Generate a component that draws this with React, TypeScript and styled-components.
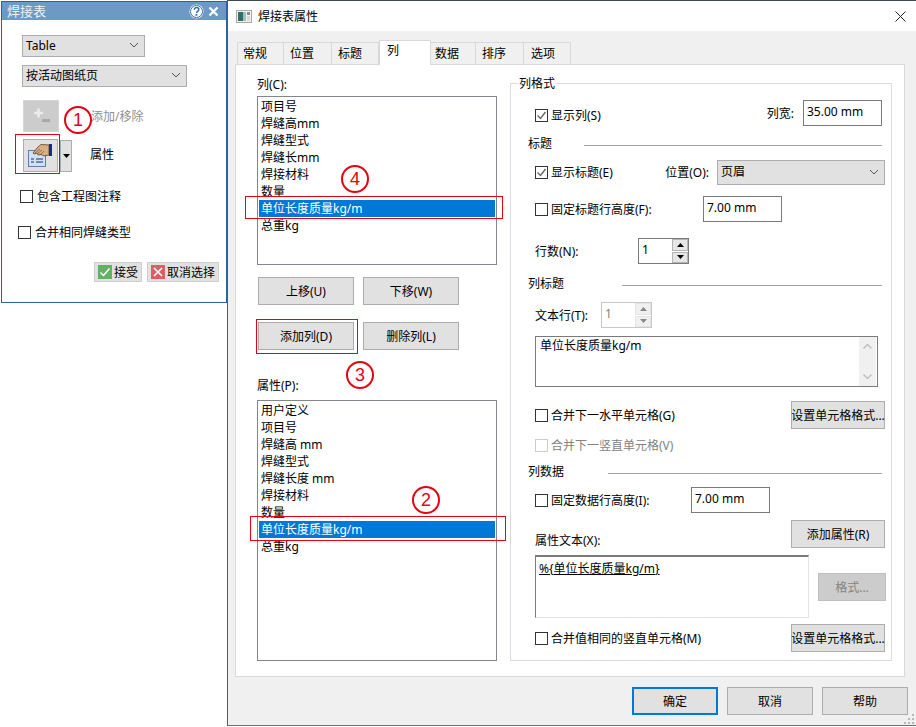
import styled, { createGlobalStyle } from "styled-components";

const GlobalStyle = createGlobalStyle`
  html, body {
    margin: 0;
    padding: 0;
    background: #fff;
    overflow: hidden;
  }
  * {
    box-sizing: border-box;
  }
`

const Desktop = styled.div`
  position: relative;
  width: 916px;
  height: 727px;
  display: flex;
  align-items: flex-start;
  background: #fff;
  color: #000;
  font-family: "Noto Sans", "Noto Sans CJK SC", sans-serif;
  font-size: 12px;
  line-height: 17px;
  white-space: nowrap;
`

/* left docked panel */
const Panel = styled.div`
  width: 226px;
  height: 302px;
  margin: 1px 0 0 1px;
  border: 1px solid #2f5f9e;
  flex-shrink: 0;
`

const PanelTitle = styled.div`
  height: 18px;
  background: #6d9ac4;
  color: #edf3f8;
  font-size: 13px;
  line-height: 18px;
  padding: 0 7px 0 5px;
  display: flex;
  align-items: center;
  justify-content: space-between;
`

const PanelIcons = styled.div`
  display: flex;
  align-items: center;
  gap: 4px;
`

const PanelRow = styled.div<{ $mt: number; $ml: number; $h: number }>`
  display: flex;
  align-items: center;
  margin: ${p => p.$mt}px 0 0 ${p => p.$ml}px;
  height: ${p => p.$h}px;
`

const Select = styled.div<{ $w: number; $h: number }>`
  width: ${p => p.$w}px;
  height: ${p => p.$h}px;
  background: #e1e1e1;
  border: 1px solid #adadad;
  padding: 0 5px 2px 3px;
  display: flex;
  align-items: center;
  justify-content: space-between;
`

const ToolButton = styled.div<{ $w: number; $h: number; $off?: boolean }>`
  width: ${p => p.$w}px;
  height: ${p => p.$h}px;
  background: ${p => (p.$off ? "#cccccc" : "#e1e1e1")};
  border: 1px solid ${p => (p.$off ? "#d6d6d6" : "#adadad")};
  display: flex;
  align-items: center;
  justify-content: center;
`

const SplitArrow = styled(ToolButton)`
  margin-left: 2px;
`

const ToolLabel = styled.span<{ $ml: number; $off?: boolean; $dy?: number }>`
  margin-left: ${p => p.$ml}px;
  margin-top: ${p => p.$dy ?? 0}px;
  color: ${p => (p.$off ? "#8f8f8f" : "#000")};
`

const ActionButton = styled.div<{ $w: number; $mr?: number }>`
  width: ${p => p.$w}px;
  height: 20px;
  margin-right: ${p => p.$mr ?? 0}px;
  background: #e1e1e1;
  border: 1px solid #cfcfcf;
  display: flex;
  align-items: center;
  justify-content: center;
  gap: 2px;
`

/* properties dialog */
const Dialog = styled.div`
  flex: 1;
  height: 726px;
  margin-left: 0;
  border-left: 1px solid #5a5a5a;
  border-top: 1px solid #3f4a55;
  border-bottom: 1px solid #6e6e6e;
  display: flex;
  flex-direction: column;
`

const DialogTitle = styled.div`
  height: 30px;
  background: #fff;
  padding: 0 10px 0 8px;
  display: flex;
  align-items: center;
  gap: 6px;
`

const CloseBox = styled.div`
  margin-left: auto;
  display: flex;
`

const DialogBody = styled.div`
  flex: 1;
  background: #f0f0f0;
  display: flex;
  flex-direction: column;
`

const TabStrip = styled.div`
  display: flex;
  align-items: flex-end;
  height: 25px;
  margin: 9px 0 -1px 9px;
  position: relative;
`

const Tab = styled.div<{ $w: number; $pl: number; $active?: boolean }>`
  width: ${p => p.$w}px;
  height: ${p => (p.$active ? 25 : 23)}px;
  background: ${p => (p.$active ? "#fff" : "#f0f0f0")};
  border: 1px solid #d9d9d9;
  border-left-width: ${p => (p.$active ? 1 : 0)}px;
  border-bottom-width: ${p => (p.$active ? 0 : 1)}px;
  padding: ${p => (p.$active ? 1 : 2)}px 0 0 ${p => p.$pl}px;
  z-index: ${p => (p.$active ? 2 : 0)};
  &:first-child {
    border-left-width: 1px;
  }
`

const TabPanel = styled.div`
  width: 670px;
  height: 613px;
  margin-left: 7px;
  background: #fff;
  border: 1px solid #d9d9d9;
  display: flex;
  padding-left: 21px;
`

const LeftColumn = styled.div`
  width: 240px;
  padding-top: 11px;
`

const ColumnLabel = styled.div<{ $h: number; $pt?: number }>`
  height: ${p => p.$h}px;
  padding-top: ${p => p.$pt ?? 0}px;
`

const ListBox = styled.div<{ $h: number }>`
  height: ${p => p.$h}px;
  border: 1px solid #82878f;
  padding: 1px;
  background: #fff;
`

const ListItem = styled.div<{ $selected?: boolean }>`
  height: 17px;
  line-height: 17px;
  padding-left: 2px;
  background: ${p => (p.$selected ? "#0078d7" : "transparent")};
  color: ${p => (p.$selected ? "#fff" : "#000")};
`

const ButtonRow = styled.div<{ $mt: number }>`
  display: flex;
  gap: 9px;
  margin: ${p => p.$mt}px 0 0 1px;
`

const Button = styled.div<{ $w: number; $off?: boolean; $default?: boolean }>`
  width: ${p => p.$w}px;
  height: 28px;
  flex-shrink: 0;
  background: ${p => (p.$off ? "#cccccc" : "#e1e1e1")};
  border: ${p => (p.$default ? "2px solid #0078d7" : `1px solid ${p.$off ? "#bfbfbf" : "#adadad"}`)};
  color: ${p => (p.$off ? "#838383" : "#000")};
  display: flex;
  align-items: center;
  justify-content: center;
`

const GroupBox = styled.div`
  position: relative;
  width: 382px;
  height: 578px;
  margin: 18px 0 0 13px;
  border: 1px solid #dcdcdc;
`

const GroupLegend = styled.span`
  position: absolute;
  left: 7px;
  top: -9px;
  padding: 0 1px;
  background: #fff;
`

const FormRow = styled.div<{ $mt: number; $h: number; $pr?: number }>`
  display: flex;
  align-items: center;
  justify-content: space-between;
  height: ${p => p.$h}px;
  margin-top: ${p => p.$mt}px;
  padding: 0 ${p => p.$pr ?? 6}px 0 24px;
`

const Cluster = styled.div`
  display: flex;
  align-items: center;
`

const Field = styled.label<{ $w?: number; $dy?: number; $off?: boolean }>`
  display: flex;
  align-items: center;
  gap: 3px;
  width: ${p => (p.$w ? `${p.$w}px` : "auto")};
  margin-top: ${p => p.$dy ?? 0}px;
  color: ${p => (p.$off ? "#838383" : "#000")};
`

const Box = styled.span<{ $off?: boolean }>`
  width: 13px;
  height: 13px;
  flex-shrink: 0;
  background: #fff;
  border: 1px solid ${p => (p.$off ? "#cccccc" : "#333")};
  display: flex;
  align-items: center;
  justify-content: center;
`

const PanelField = styled(Field)`
  gap: 4px;
`

const TextInput = styled.div<{ $w: number }>`
  width: ${p => p.$w}px;
  height: 26px;
  flex-shrink: 0;
  border: 1px solid #7a7a7a;
  background: #fff;
  padding: 2px 0 0 3px;
`

const FieldLabel = styled.span<{ $w?: number; $dy?: number; $mr?: number }>`
  display: inline-block;
  width: ${p => (p.$w ? `${p.$w}px` : "auto")};
  margin-top: ${p => p.$dy ?? 0}px;
  margin-right: ${p => p.$mr ?? 0}px;
`

const SectionRow = styled.div<{ $mt: number }>`
  display: flex;
  align-items: center;
  height: 18px;
  margin-top: ${p => p.$mt}px;
  padding: 0 9px 0 17px;
`

const SectionLabel = styled.span<{ $w: number }>`
  width: ${p => p.$w}px;
`

const SectionLine = styled.div`
  flex: 1;
  height: 1px;
  margin-top: 5px;
  background: #a0a0a0;
`

const Spin = styled.div<{ $off?: boolean }>`
  width: 51px;
  height: 26px;
  display: flex;
  background: #fff;
  border: 1px solid ${p => (p.$off ? "#c8c8c8" : "#7a7a7a")};
  color: ${p => (p.$off ? "#838383" : "#000")};
`

const SpinValue = styled.div`
  flex: 1;
  padding: 2px 0 0 3px;
`

const SpinButtons = styled.div`
  width: 16px;
  display: flex;
  flex-direction: column;
  gap: 1px;
`

const SpinButton = styled.div<{ $off?: boolean }>`
  flex: 1;
  background: ${p => (p.$off ? "#f0f0f0" : "#e6e6e6")};
  border: 1px solid ${p => (p.$off ? "#e4e4e4" : "#b4b4b4")};
  display: flex;
  align-items: center;
  justify-content: center;
`

const TextArea = styled.div`
  width: 343px;
  height: 51px;
  margin: 8px 0 0 24px;
  border: 1px solid #7a7a7a;
  display: flex;
  justify-content: space-between;
  padding-left: 4px;
`

const ScrollTrack = styled.div`
  width: 17px;
  background: #f0f0f0;
  margin-right: 1px;
  display: flex;
  flex-direction: column;
  justify-content: space-between;
  align-items: center;
  padding: 7px 0;
`

const SunkenBox = styled.div`
  width: 274px;
  height: 63px;
  border: 1px solid #e3e3e3;
  border-top: 2px solid #7a7a7a;
  border-left: 1px solid #7a7a7a;
  padding: 3px 0 0 3px;
  text-decoration: underline;
`

const SideButton = styled(Button)`
  align-self: flex-start;
  margin-top: 18px;
`

const Footer = styled.div`
  display: flex;
  justify-content: flex-end;
  gap: 9px;
  padding: 10px 8px 0 0;
`

const Grip = styled.svg`
  position: absolute;
  right: 1px;
  bottom: 2px;
`

/* red hand-drawn annotations lying over the screenshot */
const MarkRect = styled.div<{ $x: number; $y: number; $w: number; $h: number }>`
  position: absolute;
  left: ${p => p.$x}px;
  top: ${p => p.$y}px;
  width: ${p => p.$w}px;
  height: ${p => p.$h}px;
  border: 1px solid #e60012;
  pointer-events: none;
`

const MarkCircle = styled.div<{ $cx: number; $cy: number }>`
  position: absolute;
  left: ${p => p.$cx - 14}px;
  top: ${p => p.$cy - 14}px;
  width: 28px;
  height: 28px;
  border: 2px solid #e60012;
  border-radius: 50%;
  background: #fff;
  color: #e60012;
  font-family: "Liberation Sans", sans-serif;
  font-size: 18px;
  line-height: 24px;
  text-align: center;
`

const Chevron = () => (
  <svg width="10" height="6" viewBox="0 0 10 6">
    <path d="M1 1l4 4 4-4" fill="none" stroke="#555" strokeWidth="1" />
  </svg>
)

const Check = () => (
  <svg width="11" height="11" viewBox="0 0 11 11">
    <path d="M1.5 5.5l3 3 5-6.5" fill="none" stroke="#666" strokeWidth="1.4" />
  </svg>
)

const Tri = ({ up, color = "#000" }: { up?: boolean; color?: string }) => (
  <svg width="7" height="4" viewBox="0 0 7 4">
    <path d={up ? "M3.5 0L7 4H0z" : "M0 0h7L3.5 4z"} fill={color} />
  </svg>
)

const HelpIcon = () => (
  <svg width="15" height="15" viewBox="0 0 15 15">
    <circle cx="7.5" cy="7.5" r="7" fill="#fff" />
    <circle cx="7.5" cy="7.5" r="6" fill="none" stroke="#2f6ca5" strokeWidth="1" />
    <path d="M5.300 5.800c0-1.400 1-2.200 2.200-2.200s2.300.8 2.300 2c0 1.700-2.200 1.700-2.200 3.400" fill="none" stroke="#2f6ca5" strokeWidth="1.500" />
    <rect x="6.500" y="10" width="1.800" height="1.800" fill="#2f6ca5" />
  </svg>
)

const WhiteX = () => (
  <svg width="11" height="11" viewBox="0 0 11 11">
    <path d="M1.500 1.500l8 8M9.500 1.500l-8 8" stroke="#fff" strokeWidth="2.200" />
  </svg>
)

const PlusMinusIcon = () => (
  <svg width="20" height="20" viewBox="0 0 20 20">
    <path d="M3 7h9M7.500 2.500v9" stroke="#ececec" strokeWidth="2.600" />
    <rect x="11" y="13" width="8" height="3" fill="#a8a8a8" />
  </svg>
)

const PropertyIcon = () => (
  <svg width="28" height="25" viewBox="0 0 28 25">
    <rect x="1.500" y="7.500" width="17" height="16" fill="#cfe2f5" stroke="#5f7fa8" />
    <path d="M4 16h3M9 16h7M4 19h3M9 19h7" stroke="#1d2f6f" strokeWidth="1" />
    <path d="M6 10l5-6 3-2.500 8 .5v10l-5 1-3-1.500-3 .5-1-2-3 1z" fill="#d9b084" stroke="#5c4026" strokeWidth="0.800" />
    <path d="M8 10l5-4M10 11l5-4M13 12l4-4" stroke="#7a5533" strokeWidth="0.700" />
    <rect x="22" y="1" width="3" height="12" fill="#1d2a8a" />
  </svg>
)

const AcceptIcon = () => (
  <svg width="14" height="14" viewBox="0 0 14 14">
    <rect width="14" height="14" fill="#62b266" />
    <path d="M2.500 7.500l3 3 6-7" fill="none" stroke="#fff" strokeWidth="1.400" />
  </svg>
)

const CancelIcon = () => (
  <svg width="14" height="14" viewBox="0 0 14 14">
    <rect width="14" height="14" fill="#d95f66" />
    <path d="M3 3l8 8M11 3l-8 8" stroke="#fff" strokeWidth="1.600" />
  </svg>
)

const WindowIcon = () => (
  <svg width="16" height="13" viewBox="0 0 16 13">
    <rect x="0.500" y="0.500" width="15" height="12" fill="#f2f2f2" stroke="#a8a8a8" />
    <rect x="2" y="2" width="5" height="9" fill="#2f6f68" />
    <rect x="7" y="2" width="3" height="9" fill="#9fc3bd" />
    <rect x="11" y="2" width="3" height="3" fill="#8f8f8f" />
    <rect x="11" y="6" width="3" height="5" fill="#d8d8d8" />
  </svg>
)

const columnItems = ["项目号", "焊缝高mm", "焊缝型式", "焊缝长mm", "焊接材料", "数量", "单位长度质量kg/m", "总重kg"]
const propertyItems = ["用户定义", "项目号", "焊缝高 mm", "焊缝型式", "焊缝长度 mm", "焊接材料", "数量", "单位长度质量kg/m", "总重kg"]
const tabs = [
  { name: "常规", w: 47, pl: 5 },
  { name: "位置", w: 48, pl: 6 },
  { name: "标题", w: 47, pl: 6 },
  { name: "列", w: 52, pl: 7, active: true },
  { name: "数据", w: 45, pl: 4 },
  { name: "排序", w: 48, pl: 6 },
  { name: "选项", w: 47, pl: 7 },
]

export default function App() {
  return (
    <Desktop>
      <GlobalStyle />
      <Panel>
        <PanelTitle>
          <span>焊接表</span>
          <PanelIcons>
            <HelpIcon />
            <WhiteX />
          </PanelIcons>
        </PanelTitle>
        <PanelRow $mt={15} $ml={20} $h={22}>
          <Select $w={123} $h={22}>Table<Chevron /></Select>
        </PanelRow>
        <PanelRow $mt={8} $ml={20} $h={22}>
          <Select $w={165} $h={22}>按活动图纸页<Chevron /></Select>
        </PanelRow>
        <PanelRow $mt={13} $ml={21} $h={32}>
          <ToolButton $w={36} $h={32} $off><PlusMinusIcon /></ToolButton>
          <ToolLabel $ml={32} $off $dy={1}>添加/移除</ToolLabel>
        </PanelRow>
        <PanelRow $mt={7} $ml={21} $h={33}>
          <ToolButton $w={35} $h={33}><PropertyIcon /></ToolButton>
          <SplitArrow $w={12} $h={32}><Tri /></SplitArrow>
          <ToolLabel $ml={18} $dy={-3}>属性</ToolLabel>
        </PanelRow>
        <PanelRow $mt={16} $ml={18} $h={17}>
          <PanelField><Box />包含工程图注释</PanelField>
        </PanelRow>
        <PanelRow $mt={19} $ml={16} $h={17}>
          <PanelField><Box />合并相同焊缝类型</PanelField>
        </PanelRow>
        <PanelRow $mt={21} $ml={92} $h={20}>
          <ActionButton $w={48} $mr={5}><AcceptIcon />接受</ActionButton>
          <ActionButton $w={72}><CancelIcon />取消选择</ActionButton>
        </PanelRow>
      </Panel>

      <Dialog>
        <DialogTitle>
          <WindowIcon />
          <span>焊接表属性</span>
          <CloseBox>
            <svg width="11" height="11" viewBox="0 0 11 11">
              <path d="M.5.5l10 10M10.500.5l-10 10" stroke="#222" strokeWidth="1" />
            </svg>
          </CloseBox>
        </DialogTitle>
        <DialogBody>
          <TabStrip>
            {tabs.map(t => (
              <Tab key={t.name} $w={t.w} $pl={t.pl} $active={t.active}>{t.name}</Tab>
            ))}
          </TabStrip>
          <TabPanel>
            <LeftColumn>
              <ColumnLabel $h={20}>列(C):</ColumnLabel>
              <ListBox $h={169}>
                {columnItems.map(i => (
                  <ListItem key={i} $selected={i === "单位长度质量kg/m"}>{i}</ListItem>
                ))}
              </ListBox>
              <ButtonRow $mt={12}>
                <Button $w={96}>上移(U)</Button>
                <Button $w={96}>下移(W)</Button>
              </ButtonRow>
              <ButtonRow $mt={17}>
                <Button $w={96}>添加列(D)</Button>
                <Button $w={96}>删除列(L)</Button>
              </ButtonRow>
              <ColumnLabel $h={50} $pt={27}>属性(P):</ColumnLabel>
              <ListBox $h={261}>
                {propertyItems.map(i => (
                  <ListItem key={i} $selected={i === "单位长度质量kg/m"}>{i}</ListItem>
                ))}
              </ListBox>
            </LeftColumn>

            <GroupBox>
              <GroupLegend>列格式</GroupLegend>
              <FormRow $mt={16} $h={26} $pr={9}>
                <Field $dy={4}><Box><Check /></Box>显示列(S)</Field>
                <Cluster>
                  <FieldLabel $mr={9}>列宽:</FieldLabel>
                  <TextInput $w={79}>35.00 mm</TextInput>
                </Cluster>
              </FormRow>
              <SectionRow $mt={8}>
                <SectionLabel $w={56}>标题</SectionLabel>
                <SectionLine />
              </SectionRow>
              <FormRow $mt={8} $h={25}>
                <Field><Box><Check /></Box>显示标题(E)</Field>
                <Cluster>
                  <FieldLabel $mr={8}>位置(O):</FieldLabel>
                  <Select $w={168} $h={25}>页眉<Chevron /></Select>
                </Cluster>
              </FormRow>
              <FormRow $mt={11} $h={26} $pr={0}>
                <Cluster>
                  <Field $w={168}><Box />固定标题行高度(F):</Field>
                  <TextInput $w={79}>7.00 mm</TextInput>
                </Cluster>
              </FormRow>
              <FormRow $mt={16} $h={26}>
                <Cluster>
                  <FieldLabel $w={103}>行数(N):</FieldLabel>
                  <Spin>
                    <SpinValue>1</SpinValue>
                    <SpinButtons>
                      <SpinButton><Tri up /></SpinButton>
                      <SpinButton><Tri /></SpinButton>
                    </SpinButtons>
                  </Spin>
                </Cluster>
              </FormRow>
              <SectionRow $mt={10}>
                <SectionLabel $w={94}>列标题</SectionLabel>
                <SectionLine />
              </SectionRow>
              <FormRow $mt={10} $h={26}>
                <Cluster>
                  <FieldLabel $w={66}>文本行(T):</FieldLabel>
                  <Spin $off>
                    <SpinValue>1</SpinValue>
                    <SpinButtons>
                      <SpinButton $off><Tri up color="#888" /></SpinButton>
                      <SpinButton $off><Tri color="#888" /></SpinButton>
                    </SpinButtons>
                  </Spin>
                </Cluster>
              </FormRow>
              <TextArea>
                <span>单位长度质量kg/m</span>
                <ScrollTrack>
                  <svg width="9" height="5" viewBox="0 0 9 5"><path d="M.5 4.500l4-4 4 4" fill="none" stroke="#bdbdbd" strokeWidth="1.400" /></svg>
                  <svg width="9" height="5" viewBox="0 0 9 5"><path d="M.5.500l4 4 4-4" fill="none" stroke="#bdbdbd" strokeWidth="1.400" /></svg>
                </ScrollTrack>
              </TextArea>
              <FormRow $mt={14} $h={28}>
                <Field><Box />合并下一水平单元格(G)</Field>
                <Button $w={94}>设置单元格格式...</Button>
              </FormRow>
              <FormRow $mt={8} $h={16}>
                <Field $off><Box $off />合并下一竖直单元格(V)</Field>
              </FormRow>
              <SectionRow $mt={9}>
                <SectionLabel $w={80}>列数据</SectionLabel>
                <SectionLine />
              </SectionRow>
              <FormRow $mt={7} $h={26} $pr={0}>
                <Cluster>
                  <Field $w={156}><Box />固定数据行高度(I):</Field>
                  <TextInput $w={79}>7.00 mm</TextInput>
                </Cluster>
              </FormRow>
              <FormRow $mt={7} $h={28}>
                <FieldLabel $dy={12}>属性文本(X):</FieldLabel>
                <Button $w={94}>添加属性(R)</Button>
              </FormRow>
              <FormRow $mt={7} $h={63} $pr={5}>
                <SunkenBox>%{"{"}单位长度质量kg/m{"}"}</SunkenBox>
                <SideButton $w={68} $off>格式...</SideButton>
              </FormRow>
              <FormRow $mt={6} $h={28}>
                <Field><Box />合并值相同的竖直单元格(M)</Field>
                <Button $w={94}>设置单元格格式...</Button>
              </FormRow>
            </GroupBox>
          </TabPanel>
          <Footer>
            <Button $w={86} $default>确定</Button>
            <Button $w={86}>取消</Button>
            <Button $w={86}>帮助</Button>
          </Footer>
        </DialogBody>
      </Dialog>

      <Grip width="11" height="11" viewBox="0 0 11 11">
        <path d="M8 0h2v2H8zM4 4h2v2H4zM8 4h2v2H8zM0 8h2v2H0zM4 8h2v2H4zM8 8h2v2H8z" fill="#b8b8b8" />
      </Grip>

      <MarkRect $x={15} $y={134} $w={45} $h={40} />
      <MarkRect $x={245} $y={196} $w={258} $h={23} />
      <MarkRect $x={256} $y={319} $w={102} $h={35} />
      <MarkRect $x={250} $y={516} $w={256} $h={25} />
      <MarkCircle $cx={78} $cy={120}>1</MarkCircle>
      <MarkCircle $cx={426} $cy={500}>2</MarkCircle>
      <MarkCircle $cx={360} $cy={375}>3</MarkCircle>
      <MarkCircle $cx={355} $cy={179}>4</MarkCircle>
    </Desktop>
  )
}
